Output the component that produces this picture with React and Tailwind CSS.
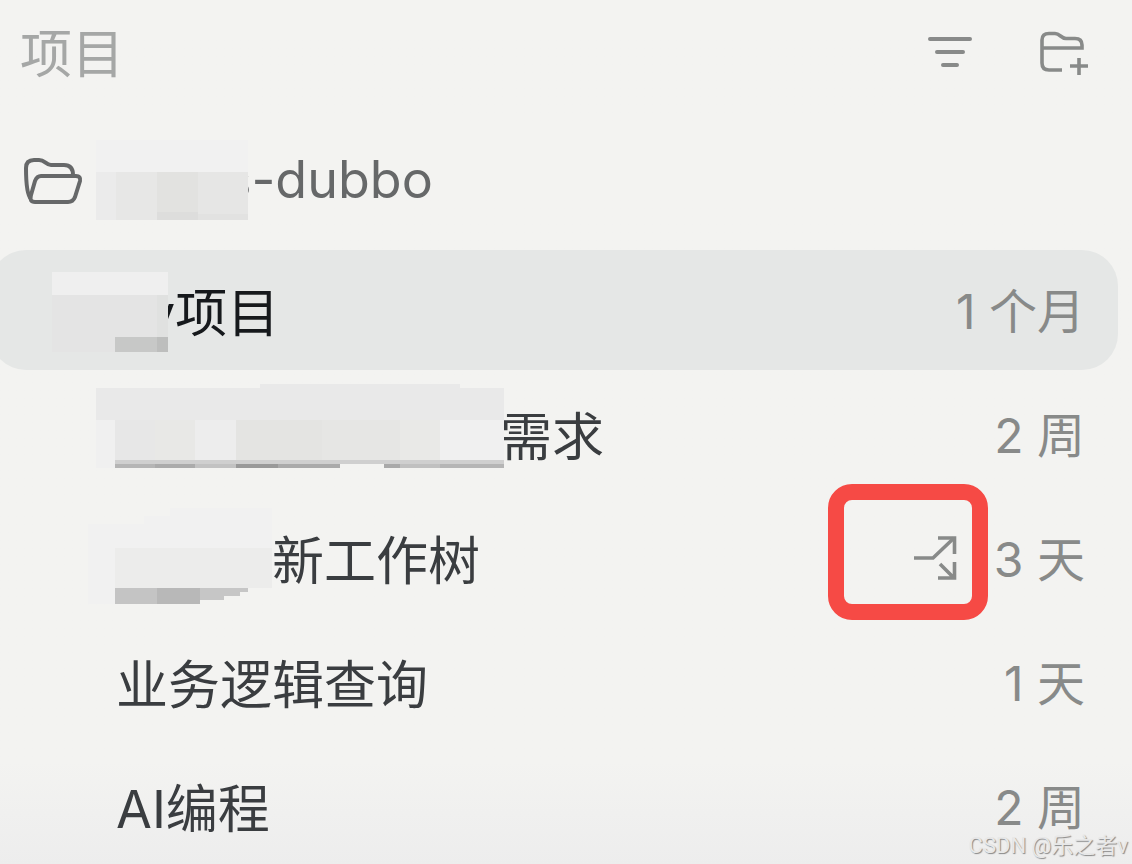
import React from "react";

const FONT = "font-[Inter,'Noto_Sans_CJK_SC',sans-serif]";

// each block: [x, y, width, height, color]
const MOSAICS = {
  repo: {
    width: 152,
    blocks: [
      [0, 18, 152, 32, "#f1f1f1"],
      [0, 50, 20, 48, "#ebebeb"],
      [20, 50, 41, 48, "#e7e7e6"],
      [61, 50, 41, 48, "#e2e2e0"],
      [102, 50, 50, 48, "#e6e6e5"],
      [61, 90, 41, 8, "#dddddc"],
      [102, 92, 50, 6, "#e2e2e1"],
    ],
  },
  current: {
    width: 116,
    blocks: [
      [0, 22, 116, 23, "#efefef"],
      [0, 45, 116, 57, "#e4e4e4"],
      [105, 45, 11, 42, "#e0e1e0"],
      [63, 87, 42, 15, "#c7c8c7"],
      [105, 87, 11, 15, "#bdbebd"],
    ],
  },
  demand: {
    width: 408,
    blocks: [
      [164, 10, 200, 4, "#e9e9e9"],
      [0, 14, 408, 32, "#e9e9e9"],
      [0, 46, 19, 48, "#f0f0f0"],
      [19, 46, 40, 40, "#e7e7e7"],
      [59, 46, 40, 40, "#e8e8e6"],
      [99, 46, 41, 40, "#ededed"],
      [140, 46, 86, 40, "#e4e4e2"],
      [226, 46, 78, 40, "#e6e6e4"],
      [304, 46, 40, 40, "#e9e9e7"],
      [344, 46, 64, 40, "#f0f0f0"],
      [19, 86, 389, 4, "#cfcfcf"],
      [19, 90, 40, 4, "#b5b5b5"],
      [59, 90, 40, 4, "#ababab"],
      [99, 90, 41, 4, "#c2c2c2"],
      [140, 90, 42, 4, "#999999"],
      [182, 90, 62, 4, "#aaaaaa"],
      [288, 90, 16, 4, "#a9a9a9"],
      [304, 90, 40, 4, "#c0c0c0"],
      [344, 90, 64, 4, "#b5b5b5"],
    ],
  },
  worktree: {
    width: 184,
    blocks: [
      [82, 10, 102, 8, "#f1f1f1"],
      [56, 18, 128, 8, "#f1f1f1"],
      [0, 26, 184, 24, "#f1f1f1"],
      [0, 50, 27, 56, "#f1f1f1"],
      [27, 50, 157, 40, "#ececeb"],
      [27, 90, 42, 16, "#c4c4c4"],
      [69, 90, 43, 16, "#b8b8b8"],
      [112, 90, 24, 12, "#c6c6c6"],
      [136, 90, 16, 8, "#c6c6c6"],
      [152, 90, 8, 4, "#c6c6c6"],
    ],
  },
};

const TASKS = [
  { id: 1, name: "v项目", time: "1 个月", mosaic: "current", indent: "pl-[62px]", overlap: "-ml-[22px]", active: true },
  { id: 2, name: "需求", time: "2 周", mosaic: "demand", indent: "pl-[106px]", overlap: "-ml-1" },
  { id: 3, name: "新工作树", time: "3 天", mosaic: "worktree", indent: "pl-[98px]", overlap: "", branch: true },
  { id: 4, name: "业务逻辑查询", time: "1 天", indent: "pl-[126px]", overlap: "" },
  { id: 5, name: "AI编程", time: "2 周", indent: "pl-[126px]", overlap: "" },
];

function Mosaic({ name }) {
  const { width, blocks } = MOSAICS[name];
  return (
    <svg width={width} height="120" className="relative z-10 shrink-0" shapeRendering="crispEdges" aria-hidden="true">
      {blocks.map(([x, y, w, h, fill], i) => (
        <rect key={i} x={x} y={y} width={w} height={h} fill={fill} />
      ))}
    </svg>
  );
}

function FilterIcon() {
  return (
    <svg width="48" height="36" fill="none" stroke="currentColor" strokeWidth="4" strokeLinecap="round">
      <path d="M4 4H44M11 17H37M17 30H31" />
    </svg>
  );
}

function FolderPlusIcon() {
  return (
    <svg width="52" height="46" fill="none" stroke="currentColor" strokeWidth="3.6">
      <path d="M4 18H44V15Q44 8.5 37 8.5H28C23 8.5 22 3.5 17 3.5H11Q4 3.5 4 10V33Q4 40 11 40H24" />
      <path d="M41 28V45M32 36H50" />
    </svg>
  );
}

function FolderOpenIcon() {
  return (
    <svg width="60" height="48" fill="none" stroke="currentColor" strokeWidth="4" strokeLinejoin="round" className="shrink-0">
      <path d="M8 41C4 37 3 22 3 10Q3 2 11 2H16C22 2 23 7 28 7H41Q50 7 50 17" />
      <path d="M18 18H53Q58 18 57 23L52 39Q50 44 45 44H12Q6 44 8 37L12 23Q14 18 18 18Z" />
    </svg>
  );
}

function BranchIcon() {
  return (
    <svg width="46" height="48" fill="none" stroke="currentColor" strokeWidth="3.6">
      <path d="M2 24H21L42 4" />
      <path d="M26 4H42.5V20M28 30L42 44M26 44H42.5V28" />
    </svg>
  );
}

function TaskRow({ task }) {
  return (
    <li>
      <button
        type="button"
        className={`flex h-[120px] w-full items-center rounded-[36px] pr-[33px] text-left whitespace-nowrap ${task.indent} ${
          task.active ? "bg-[#e5e7e6] text-[#16191c]" : "text-[#3a3d40]"
        }`}
      >
        {task.mosaic && <Mosaic name={task.mosaic} />}
        <span className={`pt-2 text-[52px] leading-[60px] ${task.overlap}`}>{task.name}</span>
        <span className="ml-auto flex items-center gap-9 text-[#888a89]">
          {task.branch && (
            <span className="relative">
              <BranchIcon />
              <span className="absolute -top-[50px] -right-[30px] h-[136px] w-40 rounded-3xl border-16 border-[#f64a45]" />
            </span>
          )}
          <span className="pt-1 text-5xl leading-[60px]">{task.time}</span>
        </span>
      </button>
    </li>
  );
}

export default function App() {
  return (
    <main className={`relative min-h-screen overflow-hidden bg-[#f3f3f1] bg-linear-to-b from-[#f3f3f1] from-88% to-[#ededed] ${FONT}`}>
      <header className="flex h-[106px] items-center justify-between pr-[42px] pl-5">
        <h1 className="pt-1 text-[52px] leading-[60px] text-[#a5a7a6]">项目</h1>
        <div className="flex items-center gap-16 text-[#888a89]">
          <button type="button" aria-label="筛选">
            <FilterIcon />
          </button>
          <button type="button" aria-label="新建项目">
            <FolderPlusIcon />
          </button>
        </div>
      </header>

      <section className="mt-4">
        <button type="button" className="flex h-[120px] w-full items-center pl-[23px] text-left text-[#666869]">
          <FolderOpenIcon />
          <span className="ml-[13px] flex items-center">
            <Mosaic name="repo" />
            <span className="-ml-6 pb-1 text-[52px] leading-[60px]">s-dubbo</span>
          </span>
        </button>

        <ul className="mt-2 mr-3.5 -ml-2.5 space-y-1">
          {TASKS.map((task) => (
            <TaskRow key={task.id} task={task} />
          ))}
        </ul>
      </section>

      <p className="absolute right-1 bottom-1 font-[Roboto,'Noto_Sans_CJK_SC',sans-serif] text-[22px] leading-8 text-[#e8e8e8] [text-shadow:1px_1px_1px_#888]">
        CSDN @乐之者v
      </p>
    </main>
  );
}
